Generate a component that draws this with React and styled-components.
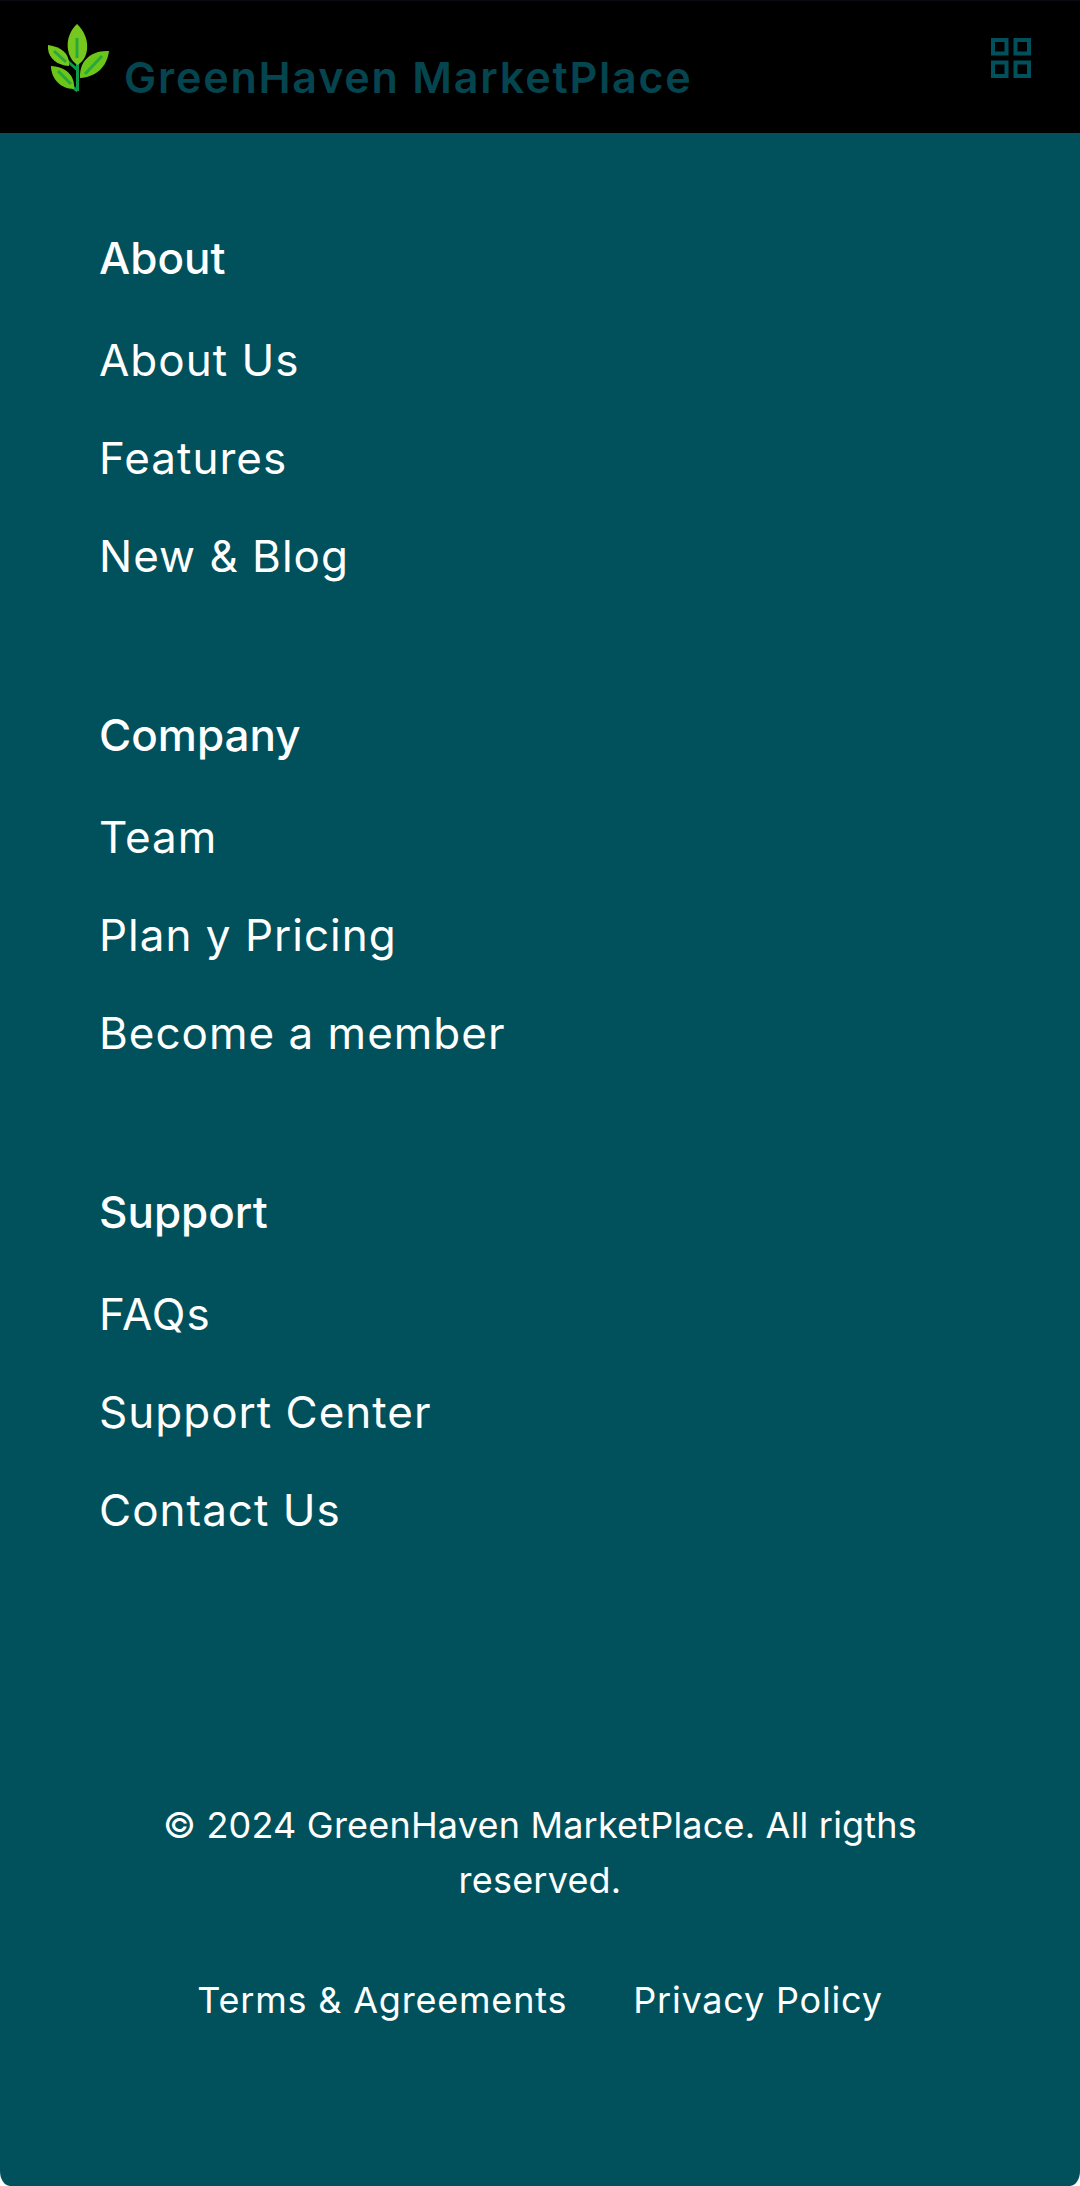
import React from 'react';
import styled, { createGlobalStyle } from 'styled-components';

const GlobalStyle = createGlobalStyle`
  html, body {
    margin: 0;
    padding: 0;
    background: #fff;
  }
`;

const Page = styled.div`
  width: 1080px;
  height: 2186px;
  display: flex;
  flex-direction: column;
  background: #00515c;
  color: #fff;
  font-family: "Inter", "Liberation Sans", sans-serif;
  border-radius: 0 0 10px 10px / 0 0 15px 15px;
  overflow: hidden;
`;

const Header = styled.header`
  height: 133px;
  flex-shrink: 0;
  box-sizing: border-box;
  display: flex;
  justify-content: space-between;
  background: #000;
  border-top: 1px solid #0a0a14;
  padding: 23px 48px 0;
`;

const Brand = styled.div`
  display: flex;
  align-items: flex-start;
  gap: 15px;
`;

const BrandName = styled.span`
  margin-top: 29px;
  font-size: 43px;
  line-height: 48px;
  letter-spacing: 1.8px;
  font-weight: 600;
  color: #04454f;
  white-space: nowrap;
`;

const MenuButton = styled.div`
  margin-top: 14px;
  margin-right: 1px;
  color: #00515c;
`;

const Nav = styled.nav`
  display: flex;
  flex-direction: column;
  gap: 104px;
  padding: 99px 99px 0;
`;

const Section = styled.section`
  display: flex;
  flex-direction: column;
`;

const SectionTitle = styled.h3`
  margin: 0 0 27px;
  font-size: 44px;
  line-height: 52px;
  font-weight: 500;
`;

const NavLink = styled.a`
  font-size: 44px;
  line-height: 98px;
  letter-spacing: 1px;
  color: #fff;
`;

const Footer = styled.footer`
  margin-top: 239px;
  display: flex;
  flex-direction: column;
  align-items: center;
  font-size: 36px;
`;

const Copyright = styled.p`
  margin: 0;
  width: 800px;
  text-align: center;
  line-height: 55px;
  letter-spacing: 0.2px;
`;

const FooterLinks = styled.div`
  display: flex;
  gap: 66px;
  margin-top: 65px;
  line-height: 55px;
  letter-spacing: 0.8px;
`;

const LeafLogo = () => (
  <svg width="61" height="68" viewBox="0 0 61 68" fill="none">
    <path d="M29.5 67 L29.5 30" stroke="#0f9a4a" strokeWidth="3" />
    <path d="M29.5 46 L14 32 M29.5 67 L14 54" stroke="#0f9a4a" strokeWidth="3" />
    <path d="M29.5 41 C18 34 15 13 29 0 C43 13 42 34 29.5 41Z" fill="#76c81e" />
    <path d="M29 34 L29 14" stroke="#2aa83a" strokeWidth="3" />
    <path d="M32 54 C31 37 43 26 61 27 C59 43 48 53 32 54Z" fill="#6cc61a" />
    <path d="M37 50 L54 32" stroke="#2aa83a" strokeWidth="3" />
    <path d="M21 42 C7 41 -1 32 0 21 C14 23 22 30 21 42Z" fill="#76c81e" />
    <path d="M18 38 L6 27" stroke="#2aa83a" strokeWidth="3" />
    <path d="M26 65 C12 65 3 54 3 42 C18 43 27 51 26 65Z" fill="#6cc61a" />
    <path d="M23 60 L10 47" stroke="#2aa83a" strokeWidth="3" />
  </svg>
);

const GridIcon = () => (
  <svg width="40" height="40" viewBox="0 0 40 40" fill="none" stroke="currentColor" strokeWidth="4">
    <rect x="2" y="2" width="13.5" height="13.5" />
    <rect x="24.5" y="2" width="13.5" height="13.5" />
    <rect x="2" y="24.5" width="13.5" height="13.5" />
    <rect x="24.5" y="24.5" width="13.5" height="13.5" />
  </svg>
);

const sections = [
  { title: 'About', links: ['About Us', 'Features', 'New & Blog'] },
  { title: 'Company', links: ['Team', 'Plan y Pricing', 'Become a member'] },
  { title: 'Support', links: ['FAQs', 'Support Center', 'Contact Us'] },
];

const App = () => (
  <Page>
    <GlobalStyle />
    <Header>
      <Brand>
        <LeafLogo />
        <BrandName>GreenHaven MarketPlace</BrandName>
      </Brand>
      <MenuButton>
        <GridIcon />
      </MenuButton>
    </Header>
    <Nav>
      {sections.map(section => (
        <Section key={section.title}>
          <SectionTitle>{section.title}</SectionTitle>
          {section.links.map(link => (
            <NavLink key={link}>{link}</NavLink>
          ))}
        </Section>
      ))}
    </Nav>
    <Footer>
      <Copyright>© 2024 GreenHaven MarketPlace. All rigths reserved.</Copyright>
      <FooterLinks>
        <span>Terms &amp; Agreements</span>
        <span>Privacy Policy</span>
      </FooterLinks>
    </Footer>
  </Page>
);

export default App;
